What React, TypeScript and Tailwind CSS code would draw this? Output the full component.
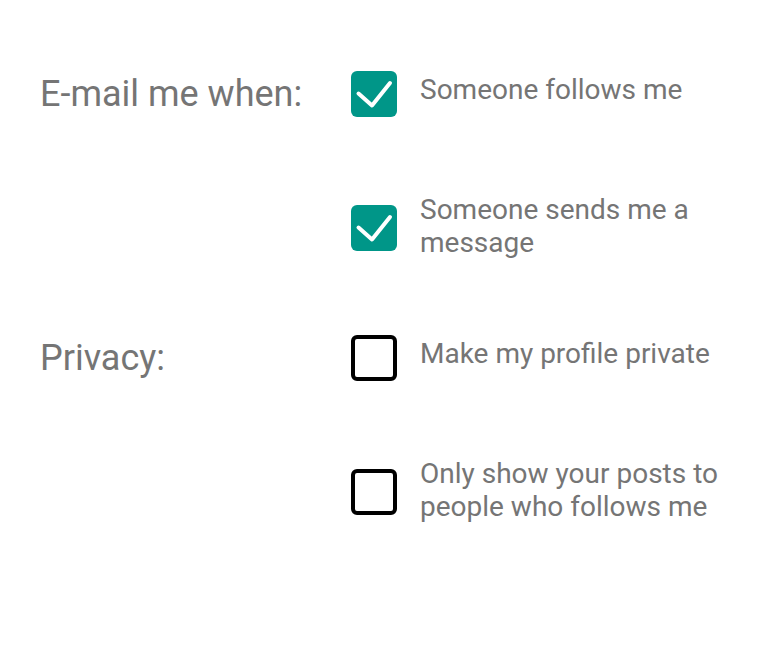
import React, { useState } from 'react';

type Option = { id: string; text: string; checked: boolean };
type Section = { label: string; options: Option[] };

const initial: Section[] = [
  {
    label: 'E-mail me when:',
    options: [
      { id: 'follows', text: 'Someone follows me', checked: true },
      { id: 'message', text: 'Someone sends me a message', checked: true },
    ],
  },
  {
    label: 'Privacy:',
    options: [
      { id: 'private', text: 'Make my profile private', checked: false },
      { id: 'followers', text: 'Only show your posts to people who follows me', checked: false },
    ],
  },
];

const Box: React.FC<{ checked: boolean; onClick: () => void }> = ({ checked, onClick }) => (
  <button
    onClick={onClick}
    className={`w-[46px] h-[46px] shrink-0 rounded-[6px] flex items-center justify-center ${checked ? 'bg-[#009688]' : 'border-[4px] border-black bg-white'}`}
  >
    {checked && (
      <svg width="46" height="46" viewBox="0 0 46 46" fill="none">
        <path d="M7.5 22.5 L21 34.5 L39 12" stroke="white" strokeWidth="4" strokeLinecap="round" strokeLinejoin="round" />
      </svg>
    )}
  </button>
);

export default function App() {
  const [sections, setSections] = useState(initial);

  const toggle = (id: string) =>
    setSections(s => s.map(sec => ({ ...sec, options: sec.options.map(o => (o.id === id ? { ...o, checked: !o.checked } : o)) })));

  return (
    <div className="bg-white min-h-screen pt-[71px] pl-[40px] font-['Roboto',sans-serif] text-[#757575]">
      <div className="flex flex-col gap-[74px]">
        {sections.map(sec => (
          <div key={sec.label} className="flex flex-col gap-[78px]">
            {sec.options.map((o, i) => (
              <div key={o.id} className="flex items-center">
                <div className="w-[311px] shrink-0 text-[36px] leading-[42px]">{i === 0 ? sec.label : ''}</div>
                <Box checked={o.checked} onClick={() => toggle(o.id)} />
                <div className={`ml-[23px] w-[310px] text-[28px] leading-[33px] -translate-y-[2px] ${i === 0 ? '-mt-[6px]' : ''}`}>{o.text}</div>
              </div>
            ))}
          </div>
        ))}
      </div>
    </div>
  );
}
